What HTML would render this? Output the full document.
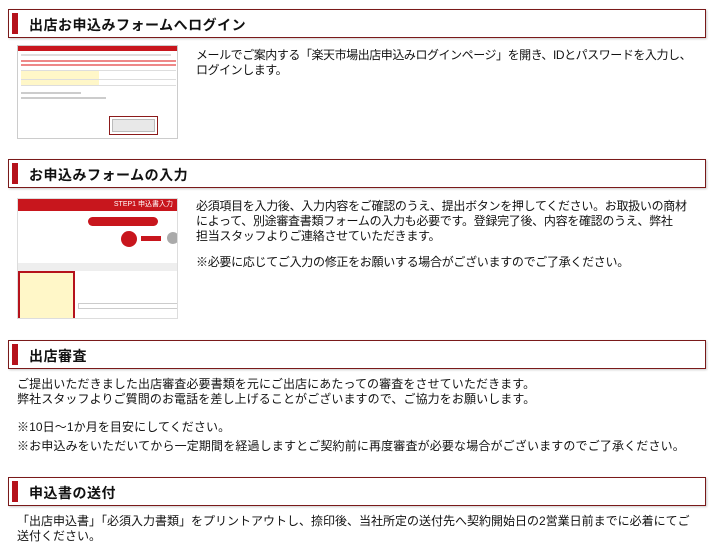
<!DOCTYPE html>
<html><head><meta charset="utf-8"><style>
*{margin:0;padding:0;box-sizing:border-box}
body{width:717px;height:551px;background:#fff;position:relative;overflow:hidden;font-family:"Liberation Sans","Noto Sans CJK JP",sans-serif;color:#111;font-size:12px}
.h{position:absolute;left:8px;width:698px;height:29px;border:1px solid #7a1a1a;box-shadow:1px 1px 2px #ccc;background:#fff}
.h i{position:absolute;left:3px;top:3px;width:6px;height:21px;background:#b5121b}
.h b{position:absolute;left:20px;top:5px;font-size:14px;font-weight:bold;color:#111;letter-spacing:.5px}
.t{position:absolute;line-height:15px;white-space:nowrap;font-size:12px;letter-spacing:-.3px}
.img{position:absolute;border:1px solid #ccc;background:#fff;overflow:hidden}
</style></head><body>
<div class="h" style="top:9px"><i></i><b>出店お申込みフォームへログイン</b></div>
<div class="img" style="left:17px;top:45px;width:161px;height:94px">
 <div style="height:5px;background:#c8161d"></div>
 <div style="position:absolute;left:3px;top:8px;width:150px;height:2px;background:#ddd"></div>
 <div style="position:absolute;left:3px;top:14px;width:155px;height:2px;background:#e88"></div>
 <div style="position:absolute;left:3px;top:18px;width:155px;height:2px;background:#e88"></div>
 <div style="position:absolute;left:3px;top:24px;width:155px;height:16px;border-top:1px solid #ddd;border-bottom:1px solid #ddd"><div style="width:78px;height:100%;background:#fff7c8"></div></div>
 <div style="position:absolute;left:3px;top:33px;width:155px;border-top:1px solid #ddd"></div>
 <div style="position:absolute;left:3px;top:46px;width:60px;height:2px;background:#ccc"></div>
 <div style="position:absolute;left:3px;top:51px;width:85px;height:2px;background:#ccc"></div>
 <div style="position:absolute;left:91px;top:70px;width:49px;height:19px;border:1px solid #8b1a1a"><div style="margin:2px;height:13px;background:#e8e8e8;border:1px solid #bbb"></div></div>
</div>
<div class="t" style="left:196px;top:48px;letter-spacing:-.45px">メールでご案内する「楽天市場出店申込みログインページ」を開き、IDとパスワードを入力し、<br>ログインします。</div>

<div class="h" style="top:159px"><i></i><b>お申込みフォームの入力</b></div>
<div class="img" style="left:17px;top:198px;width:161px;height:121px;border-color:#ddd">
 <div style="height:12px;background:#c8161d;color:#fff;font-size:7px;text-align:right;padding-right:4px;line-height:12px">STEP1 申込書入力</div>
 <div style="position:absolute;left:70px;top:18px;width:70px;height:9px;border-radius:5px;background:#c8161d"></div>
 <div style="position:absolute;left:103px;top:32px;width:16px;height:16px;border-radius:50%;background:#c8161d"></div>
 <div style="position:absolute;left:123px;top:37px;width:20px;height:5px;background:#c8161d"></div>
 <div style="position:absolute;left:149px;top:33px;width:12px;height:12px;border-radius:50%;background:#aaa"></div>
 <div style="position:absolute;left:0;top:64px;width:161px;height:8px;background:#eee"></div>
 <div style="position:absolute;left:0;top:72px;width:57px;height:49px;background:#fff7c8;border:2px solid #b5121b"></div>
 <div style="position:absolute;left:60px;top:104px;width:100px;height:6px;border:1px solid #ccc"></div>
</div>
<div class="t" style="left:196px;top:199px">必須項目を入力後、入力内容をご確認のうえ、提出ボタンを押してください。お取扱いの商材<br>によって、別途審査書類フォームの入力も必要です。登録完了後、内容を確認のうえ、弊社<br>担当スタッフよりご連絡させていただきます。</div>
<div class="t" style="left:196px;top:255px">※必要に応じてご入力の修正をお願いする場合がございますのでご了承ください。</div>

<div class="h" style="top:340px"><i></i><b>出店審査</b></div>
<div class="t" style="left:17px;top:377px;letter-spacing:.1px">ご提出いただきました出店審査必要書類を元にご出店にあたっての審査をさせていただきます。<br>弊社スタッフよりご質問のお電話を差し上げることがございますので、ご協力をお願いします。</div>
<div class="t" style="left:17px;top:420px;letter-spacing:.1px">※10日〜1か月を目安にしてください。</div>
<div class="t" style="left:17px;top:439px;letter-spacing:.15px">※お申込みをいただいてから一定期間を経過しますとご契約前に再度審査が必要な場合がございますのでご了承ください。</div>

<div class="h" style="top:477px"><i></i><b>申込書の送付</b></div>
<div class="t" style="left:17px;top:514px;letter-spacing:0">「出店申込書」「必須入力書類」をプリントアウトし、捺印後、当社所定の送付先へ契約開始日の2営業日前までに必着にてご<br>送付ください。</div>
</body></html>
